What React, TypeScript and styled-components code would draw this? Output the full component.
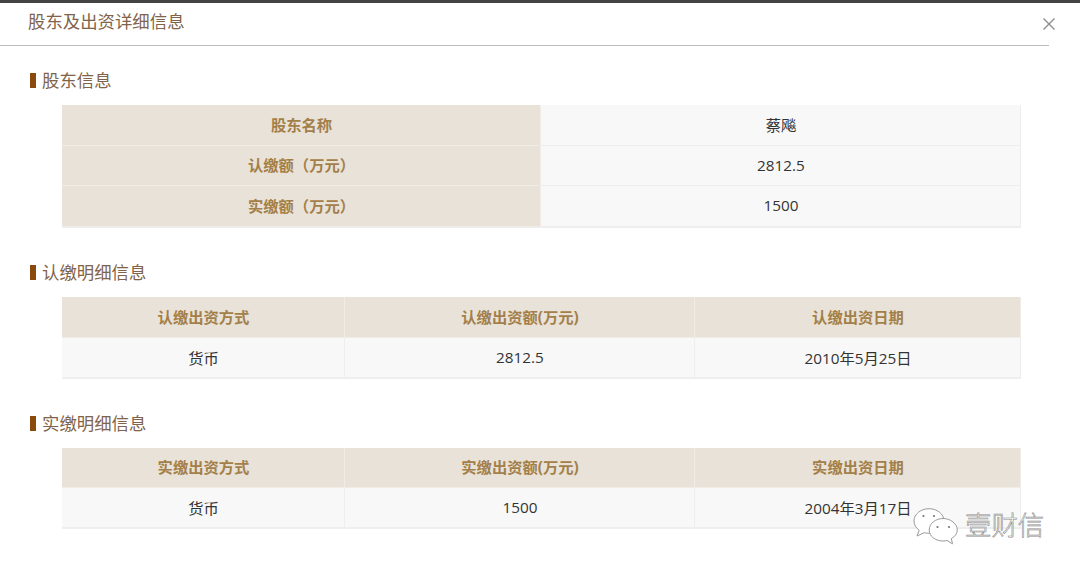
import React from 'react';
import styled, { createGlobalStyle } from 'styled-components';

const GlobalStyle = createGlobalStyle`
  html, body {
    margin: 0;
    padding: 0;
    background: #fff;
    overflow: hidden;
  }
  body {
    font-family: "Open Sans", "Noto Sans CJK SC", sans-serif;
  }
`;

const Page = styled.div`
  position: relative;
  width: 1080px;
  height: 573px;
  border-top: 3px solid #444;
  box-sizing: border-box;
  overflow: hidden;
`;

const Header = styled.header`
  width: 1049px;
  height: 43px;
  border-bottom: 1px solid #bbb;
  padding: 0 0 6px 28px;
  box-sizing: border-box;
  display: flex;
  align-items: center;
`;

const Title = styled.h1`
  margin: 0;
  font-size: 17.4px;
  font-weight: 400;
  color: #80634a;
  font-family: "Noto Sans CJK SC", sans-serif;
  line-height: 24px;
`;

const CloseButton = styled.button`
  position: absolute;
  top: 14px;
  left: 1042px;
  width: 14px;
  height: 14px;
  padding: 0;
  border: 0;
  background: none;
  color: #8e8e8e;
  svg {
    display: block;
  }
`;

const Section = styled.section<{ $gap: number }>`
  margin-top: ${({ $gap }) => $gap}px;
`;

const SectionTitle = styled.h2`
  display: flex;
  align-items: center;
  gap: 6px;
  margin: 0 0 13px 30px;
  height: 24px;
  font-size: 17.4px;
  font-weight: 400;
  line-height: 24px;
  color: #80634a;
  font-family: "Noto Sans CJK SC", sans-serif;

  &::before {
    content: '';
    width: 6px;
    height: 15px;
    background: #8a4a0c;
  }
`;

const Table = styled.div<{ $columns: string }>`
  display: grid;
  grid-template-columns: ${({ $columns }) => $columns};
  width: 959px;
  margin-left: 62px;
  background: #f8f8f8;
  border-bottom: 1px solid #eeeeee;
`;

const HeadCell = styled.div<{ $height?: number }>`
  height: ${({ $height }) => $height ?? 40}px;
  display: flex;
  align-items: center;
  justify-content: center;
  background: #e9e2d8;
  color: #a37f49;
  font-size: 15.3px;
  font-weight: 700;
  padding-bottom: 4px;
  box-sizing: border-box;
  box-shadow: inset -1px -1px 0 #f1ece5;
`;

const ValueCell = styled.div<{ $height?: number }>`
  height: ${({ $height }) => $height ?? 40}px;
  display: flex;
  align-items: center;
  justify-content: center;
  color: #333;
  font-size: 15.3px;
  padding-bottom: ${({ $height }) => ($height === 41 ? 4 : 2)}px;
  box-sizing: border-box;
  box-shadow: inset -1px -1px 0 #eeeeee;
`;

const Watermark = styled.div`
  position: absolute;
  left: 913px;
  top: 505px;
  display: flex;
  align-items: flex-start;
  gap: 7px;
  svg {
    display: block;
  }
`;

const WatermarkText = styled.span`
  font-family: "Noto Sans CJK SC", sans-serif;
  font-size: 26.4px;
  font-weight: 300;
  line-height: 36px;
  margin-top: -2px;
  color: #fff;
  -webkit-text-stroke: 0.6px #8b8b8b;
`;

const columns3 = '283px 350px 326px';

const detail = (kind: string, amount: string, date: string, headHeight: number) => (
  <Table $columns={columns3}>
    <HeadCell $height={headHeight}>{kind}出资方式</HeadCell>
    <HeadCell $height={headHeight}>{kind}出资额(万元)</HeadCell>
    <HeadCell $height={headHeight}>{kind}出资日期</HeadCell>
    <ValueCell>货币</ValueCell>
    <ValueCell>{amount}</ValueCell>
    <ValueCell>{date}</ValueCell>
  </Table>
);

export default function App() {
  return (
    <Page>
      <GlobalStyle />
      <Header>
        <Title>股东及出资详细信息</Title>
      </Header>
      <CloseButton aria-label="close">
        <svg width="14" height="14" viewBox="0 0 14 14" fill="none" stroke="currentColor" strokeWidth="1.4">
          <path d="M1.5 1.500l11 11M12.500 1.500l-11 11" />
        </svg>
      </CloseButton>

      <Section $gap={22}>
        <SectionTitle>股东信息</SectionTitle>
        <Table $columns="479px 480px">
          <HeadCell $height={41}>股东名称</HeadCell>
          <ValueCell $height={41}>蔡飚</ValueCell>
          <HeadCell>认缴额（万元）</HeadCell>
          <ValueCell>2812.5</ValueCell>
          <HeadCell $height={41}>实缴额（万元）</HeadCell>
          <ValueCell $height={41}>1500</ValueCell>
        </Table>
      </Section>

      <Section $gap={32}>
        <SectionTitle>认缴明细信息</SectionTitle>
        {detail('认缴', '2812.5', '2010年5月25日', 41)}
      </Section>

      <Section $gap={32}>
        <SectionTitle>实缴明细信息</SectionTitle>
        {detail('实缴', '1500', '2004年3月17日', 40)}
      </Section>

      <Watermark>
        <svg width="45" height="37" viewBox="0 0 45 37" fill="#fff" stroke="#9a9a9a" strokeWidth="1">
          <path d="M16 .7C7.800.7 1 6.200 1 13c0 3.800 2 7 5.200 9.200L4 28l7.200-3.300c1.500.4 3.100.6 4.800.6 8.200 0 15-5.400 15-12.300S24.200.7 16 .7z" />
          <path d="M30 10.500c-7.500 0-13.800 5.200-13.800 11.500S22.500 33 30 33c1.500 0 2.800-.2 4.100-.5l5.400 3.300-1.200-5.200c3.600-2 6-5 6-8.600 0-6.300-6.800-11.500-14.300-11.500z" />
          <circle cx="10.500" cy="8" r="1.100" fill="#777" stroke="none" />
          <circle cx="21" cy="8" r="1.100" fill="#777" stroke="none" />
          <circle cx="24.500" cy="19" r="1.100" fill="#777" stroke="none" />
          <circle cx="36" cy="19" r="1.100" fill="#777" stroke="none" />
        </svg>
        <WatermarkText>壹财信</WatermarkText>
      </Watermark>
    </Page>
  );
}
